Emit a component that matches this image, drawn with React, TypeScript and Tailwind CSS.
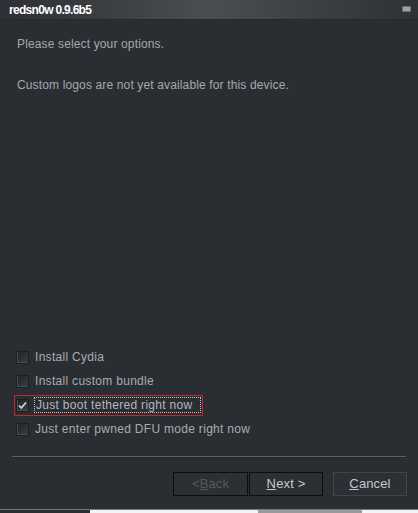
import React from "react";

const font = { fontFamily: '"Liberation Sans", Arial, sans-serif' };

function Box({ checked }: { checked?: boolean }) {
  return (
    <div className="relative h-[13px] w-[13px] shrink-0 border border-[#1c1f22] bg-gradient-to-br from-[#202326] to-[#3a3e42]">
      <div className="absolute inset-0 border-l border-b border-[#4a4e52]" />
      {checked && (
        <svg className="absolute inset-0" width="11" height="11" viewBox="0 0 11 11">
          <path d="M2 5.5 L4.3 8 L9 2.5" fill="none" stroke="#d4d8dc" strokeWidth="1.8" />
        </svg>
      )}
    </div>
  );
}

function Row({ label, checked, focused }: { label: string; checked?: boolean; focused?: boolean }) {
  return (
    <div className="flex h-[24px] items-center">
      {focused ? (
        <div className="ml-[-2px] flex h-[21px] w-[189px] items-center border border-[#c4262a] pl-[1px] pr-[1px]">
          <Box checked={checked} />
          <span className="ml-[5px] flex-1 border border-dotted border-[#c0c4c8] px-[1px] leading-[14px] text-[#b4b8bc]">
            {label}
          </span>
        </div>
      ) : (
        <>
          <Box checked={checked} />
          <span className="ml-[6px] leading-[14px] text-[#a8acb0]">{label}</span>
        </>
      )}
    </div>
  );
}

function Btn({ children, dark, disabled, w }: { children: React.ReactNode; dark?: boolean; disabled?: boolean; w: string }) {
  return (
    <div
      className={`flex h-[24px] ${w} items-center justify-center border ${
        dark ? "border-[#0c0d0e]" : "border-[#41454a]"
      } bg-[#2c3034] text-[13px] ${disabled ? "text-[#565a5e]" : "text-[#c4c8cc]"}`}
    >
      {children}
    </div>
  );
}

export default function App() {
  return (
    <div className="flex h-[513px] w-[418px] flex-col overflow-hidden bg-[#2a2e32] text-[12px] tracking-[0.14px]" style={font}>
      <div className="flex h-[20px] shrink-0 items-center justify-between border-b border-[#26292c] bg-gradient-to-r from-[#2c3034] via-[#4a4e52] to-[#2e3236] pl-[9px] pr-[7px]">
        <span className="text-[12px] font-bold tracking-[-0.7px] text-white">redsn0w 0.9.6b5</span>
        <div className="mt-[-2px] h-[6px] w-[9px] rounded-[1px] border border-[#6a6e72] bg-[#9ea2a6]" />
      </div>
      <div className="flex flex-1 flex-col pl-[17px]">
        <div className="mt-[17px] leading-[14px] text-[#a4a8ac]">Please select your options.</div>
        <div className="mt-[27px] leading-[14px] text-[#a4a8ac]">Custom logos are not yet available for this device.</div>
        <div className="flex-1" />
        <div className="ml-[-1px] flex flex-col tracking-[0.3px]">
          <Row label="Install Cydia" />
          <Row label="Install custom bundle" />
          <Row label="Just boot tethered right now" checked focused />
          <Row label="Just enter pwned DFU mode right now" />
        </div>
      </div>
      <div className="mx-[12px] mt-[15px] h-[2px] border-t border-[#5e6266] border-b border-b-[#23262a]" />
      <div className="mt-[14px] flex pr-[11px]">
        <div className="flex-1" />
        <div className="flex gap-[1px]">
          <Btn dark disabled w="w-[75px]">
            &lt; <span className="underline">B</span>ack
          </Btn>
          <Btn dark w="w-[74px]">
            <span className="underline">N</span>ext &gt;
          </Btn>
        </div>
        <div className="ml-[10px]">
          <Btn w="w-[74px]">
            <span className="underline">C</span>ancel
          </Btn>
        </div>
      </div>
      <div className="h-[13px] shrink-0" />
      <div className="h-[1px] shrink-0 bg-[#75797d]" />
      <div className="flex h-[3px] shrink-0">
        <div className="w-[90px] bg-[#2a2e32]" />
        <div className="w-[168px] bg-[#f4f4f4]" />
        <div className="w-[104px] bg-[#9a9a9a]" />
        <div className="flex-1 bg-[#f4f4f4]" />
      </div>
    </div>
  );
}
